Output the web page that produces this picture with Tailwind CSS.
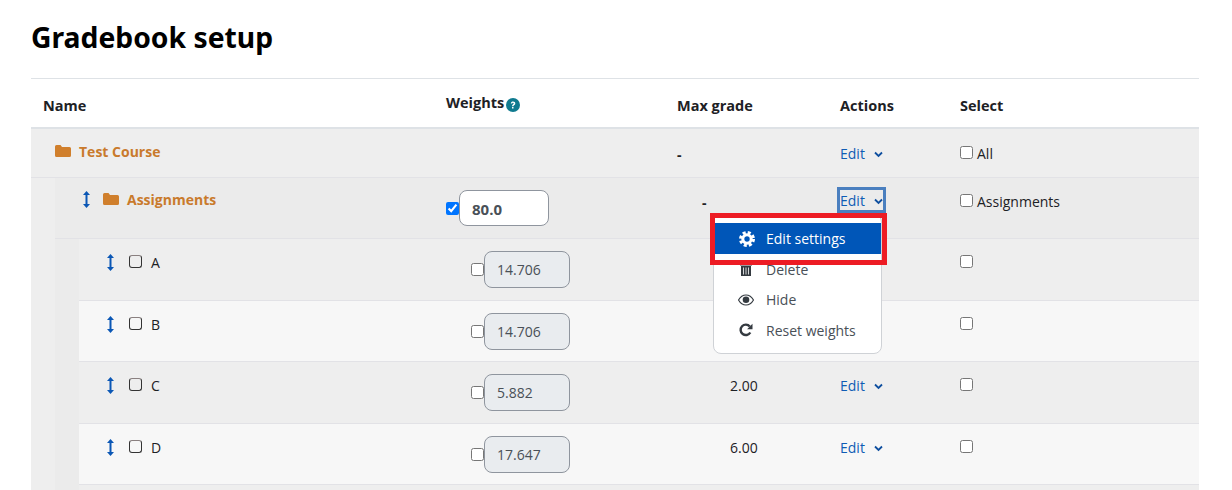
<!DOCTYPE html>
<html>
<head>
<meta charset="utf-8">
<script src="https://cdn.jsdelivr.net/npm/@tailwindcss/browser@4"></script>
</head>
<body class="bg-white overflow-hidden font-['Open_Sans',sans-serif] text-[14px] text-[#1d2125]">
<div class="relative w-[1232px] h-[490px] overflow-hidden pl-[31px] pr-[33px]">
  <h1 class="h-[78px] pt-[15px] text-[28.3px] leading-[44px] font-bold text-black font-['Noto_Sans',sans-serif]">Gradebook setup</h1>
  <div class="border-t border-[#dee2e6] border-b-2 border-b-[#dee2e6] h-[51px] flex font-bold text-[14.5px] text-[#1d2125]">
    <div class="w-[415px] pl-[12px] pt-[16px]">Name</div>
    <div class="w-[231px] pt-[13px] flex items-start gap-[2px]"><span>Weights</span>
      <svg class="mt-[6px]" width="14" height="14" viewBox="0 0 14 14"><circle cx="7" cy="7" r="7" fill="#0f7a8f"/><path d="M4.800 5.400c.2-1.200 1.100-1.800 2.300-1.800 1.300 0 2.200.7 2.200 1.800 0 1.600-1.800 1.500-1.800 2.900H6c0-2 1.700-1.900 1.700-2.900 0-.4-.3-.6-.7-.6-.5 0-.8.3-.9.8z M6 9h1.500v1.500H6z" fill="#fff"/></svg>
    </div>
    <div class="w-[163px] pt-[16px]">Max grade</div>
    <div class="w-[120px] pt-[16px]">Actions</div>
    <div class="pt-[16px]">Select</div>
  </div>
  <div class="bg-[#eeeeee]">
    <div class="h-[49px] flex border-b border-[#e2e2e6]">
      <div class="w-[646px] pl-[24px] pt-[12px] flex items-start gap-[8px] font-bold text-[#c97a2c]">
        <svg class="mt-[3px]" width="16" height="14" viewBox="0 0 16 14"><path d="M1.500 1h4l1.500 2h7.500a1.500 1.500 0 0 1 1.500 1.500v7A1.500 1.500 0 0 1 14.500 13h-13A1.500 1.500 0 0 1 0 11.500v-9A1.500 1.500 0 0 1 1.500 1z" fill="#d07f2c"/></svg>
        <span>Test Course</span>
      </div>
      <div class="w-[163px] pt-[15px] font-bold text-[#1d2125]">-</div>
      <div class="w-[120px] pt-[14px] flex items-start gap-[9px] text-[#0f5cb4]"><span>Edit</span><svg class="mt-[8px]" width="9" height="7" viewBox="0 0 9 7"><path d="M1 1.500l3.500 3.500L8 1.500" fill="none" stroke="#0f4f9f" stroke-width="1.800"/></svg></div>
      <div class="pt-[14px] flex items-start gap-[4px]"><input type="checkbox" class="mt-[3px] w-[13px] h-[13px]"><span>All</span></div>
    </div>
    <div class="ml-[24px] bg-[#ebebeb]">
      <div class="h-[61px] flex border-b border-[#e2e2e6]">
        <div class="w-[391px] pl-[28px] pt-[11px] flex items-start font-bold text-[#c97a2c]">
          <svg class="mt-[2px] mr-[13px]" width="7" height="17" viewBox="0 0 7 17"><path d="M3.500 0L7 4H4.500v9H7l-3.500 4L0 13h2.500V4H0z" fill="#0b57b5"/></svg>
          <svg class="mt-[3px] mr-[8px]" width="16" height="14" viewBox="0 0 16 14"><path d="M1.500 1h4l1.500 2h7.500a1.500 1.500 0 0 1 1.500 1.500v7A1.500 1.500 0 0 1 14.500 13h-13A1.500 1.500 0 0 1 0 11.500v-9A1.500 1.500 0 0 1 1.500 1z" fill="#d07f2c"/></svg>
          <span>Assignments</span>
        </div>
        <div class="w-[231px] pt-[12px] flex items-start">
          <input type="checkbox" checked class="mt-[12px] w-[13px] h-[13px] accent-[#0075ff]">
          <div class="w-[90px] h-[36px] bg-white border border-[#8f959e] rounded-[8px] pl-[12px] leading-[36px] text-[15px] font-bold text-[#495057]">80.0</div>
        </div>
        <div class="w-[163px] pt-[14px] pl-[25px] font-bold">-</div>
        <div class="w-[120px] pt-[9px]"><span class="inline-flex items-start gap-[9px] text-[#0f5cb4] border-[3px] border-[#4a7fbf] h-[26px] -ml-[3px] leading-[22px] w-[49px]"><span>Edit</span><svg class="mt-[8px]" width="9" height="7" viewBox="0 0 9 7"><path d="M1 1.500l3.500 3.500L8 1.500" fill="none" stroke="#0f4f9f" stroke-width="1.800"/></svg></span></div>
        <div class="pt-[13px] flex items-start gap-[4px]"><input type="checkbox" class="mt-[3px] w-[13px] h-[13px]"><span>Assignments</span></div>
      </div>
      <div class="ml-[24px]">
        <div class="h-[62px] flex border-b border-[#e2e2e6] bg-[#eeeeee]">
          <div class="w-[367px] pl-[28px] pt-[13px] flex items-start">
            <svg class="mt-[2px] mr-[15px]" width="7" height="17" viewBox="0 0 7 17"><path d="M3.500 0L7 4H4.500v9H7l-3.500 4L0 13h2.500V4H0z" fill="#0b57b5"/></svg>
            <span class="mt-[3px] w-[13px] h-[13px] rounded-[3px] border border-[#333] border-t-[#8a8080] mr-[9px]"></span><span>A</span>
          </div>
          <div class="w-[231px] pt-[12px] pl-[25px] flex items-start"><input type="checkbox" class="mt-[12px] w-[13px] h-[13px]"><div class="w-[86px] h-[37px] bg-[#e9ecef] border border-[#8f959e] rounded-[8px] pl-[12px] leading-[35px] text-[#495057]">14.706</div></div>
          <div class="w-[163px]"></div><div class="w-[120px]"></div>
          <div class="pt-[15px]"><input type="checkbox" class="mt-[1px] w-[13px] h-[13px] block"></div>
        </div>
        <div class="h-[61px] flex border-b border-[#e2e2e6] bg-[#f7f7f7]">
          <div class="w-[367px] pl-[28px] pt-[13px] flex items-start">
            <svg class="mt-[2px] mr-[15px]" width="7" height="17" viewBox="0 0 7 17"><path d="M3.500 0L7 4H4.500v9H7l-3.500 4L0 13h2.500V4H0z" fill="#0b57b5"/></svg>
            <span class="mt-[3px] w-[13px] h-[13px] rounded-[3px] border border-[#333] border-t-[#8a8080] mr-[9px]"></span><span>B</span>
          </div>
          <div class="w-[231px] pt-[12px] pl-[25px] flex items-start"><input type="checkbox" class="mt-[12px] w-[13px] h-[13px]"><div class="w-[86px] h-[37px] bg-[#e9ecef] border border-[#8f959e] rounded-[8px] pl-[12px] leading-[35px] text-[#495057]">14.706</div></div>
          <div class="w-[163px]"></div><div class="w-[120px]"></div>
          <div class="pt-[15px]"><input type="checkbox" class="mt-[1px] w-[13px] h-[13px] block"></div>
        </div>
        <div class="h-[62px] flex border-b border-[#e2e2e6] bg-[#eeeeee]">
          <div class="w-[367px] pl-[28px] pt-[13px] flex items-start">
            <svg class="mt-[2px] mr-[15px]" width="7" height="17" viewBox="0 0 7 17"><path d="M3.500 0L7 4H4.500v9H7l-3.500 4L0 13h2.500V4H0z" fill="#0b57b5"/></svg>
            <span class="mt-[3px] w-[13px] h-[13px] rounded-[3px] border border-[#333] border-t-[#8a8080] mr-[9px]"></span><span>C</span>
          </div>
          <div class="w-[231px] pt-[12px] pl-[25px] flex items-start"><input type="checkbox" class="mt-[12px] w-[13px] h-[13px]"><div class="w-[86px] h-[37px] bg-[#e9ecef] border border-[#8f959e] rounded-[8px] pl-[12px] leading-[35px] text-[#495057]">5.882</div></div>
          <div class="w-[163px] pt-[13px] pl-[53px]">2.00</div>
          <div class="w-[120px] pt-[13px] flex items-start gap-[9px] text-[#0f5cb4]"><span>Edit</span><svg class="mt-[8px]" width="9" height="7" viewBox="0 0 9 7"><path d="M1 1.500l3.500 3.500L8 1.500" fill="none" stroke="#0f4f9f" stroke-width="1.800"/></svg></div>
          <div class="pt-[15px]"><input type="checkbox" class="mt-[1px] w-[13px] h-[13px] block"></div>
        </div>
        <div class="h-[61px] flex border-b border-[#e2e2e6] bg-[#f7f7f7]">
          <div class="w-[367px] pl-[28px] pt-[13px] flex items-start">
            <svg class="mt-[2px] mr-[15px]" width="7" height="17" viewBox="0 0 7 17"><path d="M3.500 0L7 4H4.500v9H7l-3.500 4L0 13h2.500V4H0z" fill="#0b57b5"/></svg>
            <span class="mt-[3px] w-[13px] h-[13px] rounded-[3px] border border-[#333] border-t-[#8a8080] mr-[9px]"></span><span>D</span>
          </div>
          <div class="w-[231px] pt-[12px] pl-[25px] flex items-start"><input type="checkbox" class="mt-[12px] w-[13px] h-[13px]"><div class="w-[86px] h-[37px] bg-[#e9ecef] border border-[#8f959e] rounded-[8px] pl-[12px] leading-[35px] text-[#495057]">17.647</div></div>
          <div class="w-[163px] pt-[13px] pl-[53px]">6.00</div>
          <div class="w-[120px] pt-[13px] flex items-start gap-[9px] text-[#0f5cb4]"><span>Edit</span><svg class="mt-[8px]" width="9" height="7" viewBox="0 0 9 7"><path d="M1 1.500l3.500 3.500L8 1.500" fill="none" stroke="#0f4f9f" stroke-width="1.800"/></svg></div>
          <div class="pt-[15px]"><input type="checkbox" class="mt-[1px] w-[13px] h-[13px] block"></div>
        </div>
        <div class="h-[6px] bg-[#eeeeee]"></div>
      </div>
    </div>
  </div>

  <!-- dropdown menu -->
  <div class="absolute left-[713px] top-[214px] w-[169px] h-[140px] bg-white border border-[#cfd2d6] rounded-[8px] flex flex-col pt-[8px] text-[#495057]">
    <div class="h-[31px] ml-[1px] bg-[#0056b8] text-white flex items-center pl-[24px] gap-[11px]">
      <svg width="16" height="16" viewBox="0 0 16 16"><circle cx="8" cy="8" r="4.200" fill="none" stroke="#fff" stroke-width="3"/><circle cx="8" cy="8" r="6.500" fill="none" stroke="#fff" stroke-width="3" stroke-dasharray="3 2.100"/></svg>
      <span>Edit settings</span>
    </div>
    <div class="h-[30px] flex items-center pl-[26px] gap-[14px]">
      <svg width="12" height="14" viewBox="0 0 12 14"><path d="M0 1.500h12v2H0zM1 4h10v10H1z" fill="#343a40"/><path d="M3.500 5.500v7M6 5.500v7M8.500 5.500v7" stroke="#fff" stroke-width=".8"/></svg>
      <span>Delete</span>
    </div>
    <div class="h-[31px] flex items-center pl-[24px] gap-[12px]">
      <svg width="16" height="12" viewBox="0 0 16 12"><path d="M.5 6C2.500 2.500 5 1 8 1s5.500 1.500 7.500 5c-2 3.500-4.500 5-7.500 5S2.500 9.500.5 6z" fill="none" stroke="#343a40" stroke-width="1.200"/><circle cx="8" cy="5.800" r="3.300" fill="#343a40"/></svg>
      <span>Hide</span>
    </div>
    <div class="h-[30px] flex items-center pl-[25px] gap-[13px]">
      <svg width="14" height="14" viewBox="0 0 14 14"><path d="M11.300 9.500A5.200 5.200 0 1 1 10.800 3.500" fill="none" stroke="#343a40" stroke-width="2.400"/><path d="M13.500 0.800v5.400H8.100z" fill="#343a40"/></svg>
      <span>Reset weights</span>
    </div>
  </div>
  <div class="absolute left-[710px] top-[213px] w-[177px] h-[52px] border-[5px] border-[#ed1c24]"></div>
</div>
</body>
</html>
